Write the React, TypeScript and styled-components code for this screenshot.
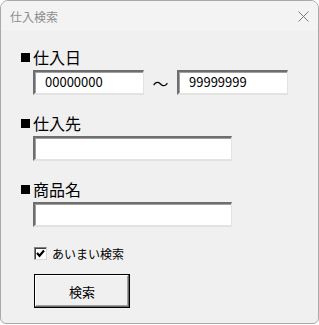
import React from "react";
import styled, { createGlobalStyle } from "styled-components";

const Global = createGlobalStyle`
  html, body { margin: 0; padding: 0; background: #ffffff; }
  #root { width: 319px; height: 325px; }
`;

const jp = `"Noto Sans CJK JP", "Noto Sans", sans-serif`;

const Window = styled.div`
  box-sizing: border-box;
  width: 319px;
  height: 324px;
  border: 1px solid #a9a9a9;
  border-radius: 8px 8px 6px 6px;
  background: #f0f0f0;
  overflow: hidden;
  display: flex;
  flex-direction: column;
  font-family: ${jp};
`;

const TitleBar = styled.div`
  height: 30px;
  flex: none;
  background: #f3f3f3;
  display: flex;
  align-items: center;
  justify-content: space-between;
  padding: 0 9px 0 9px;
`;

const Title = styled.span`
  font-size: 12px;
  color: #8c8c8c;
  line-height: 14px;
  margin-top: 1px;
`;

const Close = styled.svg`
  width: 11px;
  height: 11px;
`;

const Body = styled.div`
  flex: 1;
  display: flex;
  flex-direction: column;
  padding: 18px 0 0 19px;
`;

const Section = styled.div`
  display: flex;
  flex-direction: column;
  margin-bottom: 20px;
`;

const Label = styled.div`
  font-size: 16px;
  line-height: 16px;
  height: 16px;
  color: #000;
  display: flex;
  align-items: center;
`;

const Square = styled.span`
  width: 9px;
  height: 9px;
  background: #000;
  margin: 0 3px 0 1px;
`;

const Row = styled.div`
  display: flex;
  align-items: center;
  margin-top: 5px;
  padding-left: 13px;
`;

const Field = styled.div<{ $w: number }>`
  box-sizing: border-box;
  width: ${(p) => p.$w}px;
  height: 25px;
  background: #fff;
  border-top: 2px solid #6e6e6e;
  border-left: 2px solid #6e6e6e;
  border-right: 1px solid #e3e3e3;
  border-bottom: 2px solid #e3e3e3;
  box-shadow: inset 1px 1px 0 #a0a0a0;
  font-family: ${jp};
  font-size: 13px;
  line-height: 19px;
  padding-left: 10px;
  color: #000;
`;

const Tilde = styled.span`
  width: 33px;
  text-align: center;
  font-size: 16px;
  color: #000;
`;

const CheckRow = styled.label`
  display: flex;
  align-items: center;
  padding-left: 14px;
  margin-top: 0px;
  font-size: 12px;
  line-height: 13px;
  color: #000;
`;

const Box = styled.span`
  box-sizing: border-box;
  width: 13px;
  height: 13px;
  background: #fff;
  border-top: 1px solid #808080;
  border-left: 1px solid #808080;
  border-right: 1px solid #d8d8d8;
  border-bottom: 1px solid #d8d8d8;
  box-shadow: inset 1px 1px 0 #404040;
  margin-right: 5px;
  display: flex;
  align-items: center;
  justify-content: center;
`;

const Button = styled.button`
  box-sizing: border-box;
  width: 96px;
  height: 34px;
  margin: 14px 0 0 14px;
  background: #f0f0f0;
  border: 1px solid #000;
  box-shadow: inset -1px -1px 0 #696969, inset 1px 1px 0 #ffffff, inset -2px -2px 0 #a0a0a0;
  font-family: ${jp};
  font-size: 13px;
  color: #000;
  padding: 0;
`;

export default function App() {
  return (
    <>
      <Global />
      <Window>
        <TitleBar>
          <Title>仕入検索</Title>
          <Close viewBox="0 0 11 11">
            <path d="M0.5 0.5 L10.5 10.5 M10.5 0.5 L0.5 10.5" stroke="#7a7a7a" strokeWidth="1" fill="none" />
          </Close>
        </TitleBar>
        <Body>
          <Section>
            <Label><Square />仕入日</Label>
            <Row>
              <Field $w={111}>00000000</Field>
              <Tilde>～</Tilde>
              <Field $w={111}>99999999</Field>
            </Row>
          </Section>
          <Section>
            <Label><Square />仕入先</Label>
            <Row>
              <Field $w={199} />
            </Row>
          </Section>
          <Section>
            <Label><Square />商品名</Label>
            <Row>
              <Field $w={199} />
            </Row>
          </Section>
          <CheckRow>
            <Box>
              <svg width="9" height="9" viewBox="0 0 9 9">
                <path d="M1 4 L3.5 6.8 L8 1.5" stroke="#000" strokeWidth="2.2" fill="none" />
              </svg>
            </Box>
            あいまい検索
          </CheckRow>
          <Button>検索</Button>
        </Body>
      </Window>
    </>
  );
}
